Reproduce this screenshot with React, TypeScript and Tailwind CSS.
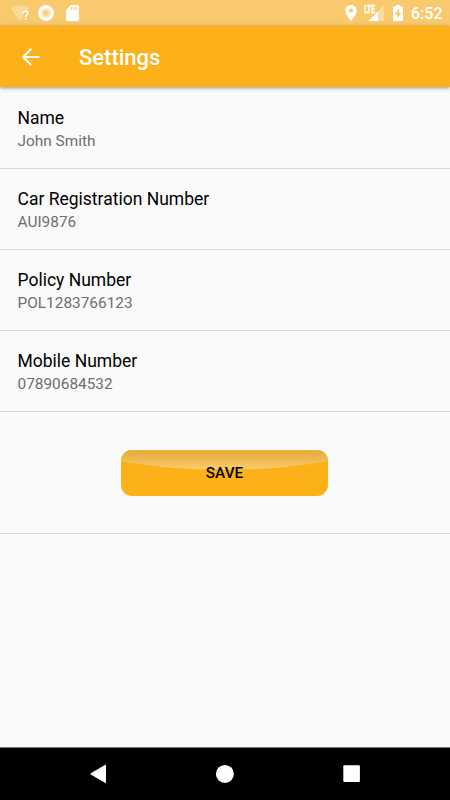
import React from "react";

const fields = [
  { label: "Name", value: "John Smith" },
  { label: "Car Registration Number", value: "AUI9876" },
  { label: "Policy Number", value: "POL1283766123" },
  { label: "Mobile Number", value: "07890684532" },
];

function StatusBar() {
  return (
    <header className="flex h-[26px] shrink-0 items-center justify-between bg-[#f9ca6d] text-white">
      <div className="flex items-center pl-[10px]">
        <svg className="h-[26px] w-5" viewBox="0 0 20 26" fill="none">
          <path d="M.7 8.8Q10 2.2 19.3 8.8L17.2 11.4H14L12.6 18L10 20.5Z" fill="#fff" fillOpacity=".32" />
          <path d="M13 13.5C13 10.4 17.8 10.5 17.8 13.2C17.8 15 15.5 15.1 15.5 17.2" stroke="#fff" strokeWidth="1.6" />
          <path d="M14.7 18.2h1.6v1.6h-1.6z" fill="#fff" />
        </svg>
        <svg className="ml-2 h-4 w-4" viewBox="0 0 16 16" fill="none">
          <circle cx="8" cy="8" r="6.4" stroke="#fff" strokeWidth="3.1" />
          <circle cx="8" cy="8" r="5" fill="#fff" fillOpacity=".5" />
          <circle cx="8" cy="8" r="2.8" fill="#f9ca6d" fillOpacity=".75" />
        </svg>
        <svg className="ml-3 h-4 w-[13px]" viewBox="0 0 13 16">
          <path fill="#fff" fillRule="evenodd" d="M5 0h6.6Q13 0 13 1.4v13.2Q13 16 11.6 16H1.4Q0 16 0 14.6V5ZM5 2v3.3h1.1v-3.3ZM7.4 2v3.3h1.1v-3.3ZM9.8 2v3.3h1.1v-3.3Z" />
        </svg>
      </div>
      <div className="flex items-center pr-2">
        <svg className="h-4 w-3" viewBox="0 0 12 16">
          <path fill="#fff" fillRule="evenodd" d="M6 0C2.7 0 .3 2.4.3 5.6C.3 9.8 6 16 6 16s5.7-6.2 5.7-10.4C11.7 2.4 9.3 0 6 0Zm0 3.6a2 2 0 1 1 0 4a2 2 0 0 1 0-4Z" />
        </svg>
        <svg className="ml-[7px] h-[26px] w-5" viewBox="0 0 20 26">
          <path d="M20 5.3V21H14V11.3Z" fill="#fff" fillOpacity=".35" />
          <path d="M4.3 21L14 11.3V21Z" fill="#fff" />
          <text x="0.3" y="12.6" fill="#fff" stroke="#fff" strokeWidth=".4" fontFamily="Roboto, sans-serif" fontSize="10" fontWeight="700" textLength="10.5" lengthAdjust="spacingAndGlyphs">LTE</text>
        </svg>
        <svg className="ml-[9px] h-4 w-[10px]" viewBox="0 0 10 16">
          <path fill="#fff" fillRule="evenodd" d="M3 0h4v1.5h2Q10 1.5 10 2.5V15Q10 16 9 16H1Q0 16 0 15V2.5Q0 1.5 1 1.5H3ZM6.2 3.6L1.8 9.2H4.2V13.8L8.3 7.9H6.2Z" />
        </svg>
        <span className="ml-2 w-[31px] pt-[2px] text-[16px] leading-none font-medium">6:52</span>
      </div>
    </header>
  );
}

function SaveButton() {
  return (
    <button className="relative h-[46px] w-[207px] overflow-hidden rounded-[11px] bg-[#fdb118] pt-px text-[15.3px] font-medium text-black">
      <svg className="absolute inset-0 h-[46px] w-[207px]" viewBox="0 0 207 46">
        <defs>
          <linearGradient id="gloss" x1="0" y1="0" x2="0" y2="1">
            <stop offset="0.2" stopColor="#e8b040" />
            <stop offset="1" stopColor="#f9cd70" />
          </linearGradient>
        </defs>
        <path d="M0 0H207V11Q160 19.8 103.5 19.8T0 11Z" fill="url(#gloss)" />
      </svg>
      <span className="relative">SAVE</span>
    </button>
  );
}

export default function App() {
  return (
    <div className="flex h-[800px] w-[450px] flex-col overflow-hidden bg-[#fafafa] font-['Roboto',sans-serif]">
      <StatusBar />
      <div className="z-10 flex h-[61.3px] shrink-0 items-center bg-[#fdb118] text-white shadow-[0_1px_4px_rgba(0,0,0,0.42)]">
        <svg className="ml-[22px] h-[18px] w-[18px]" viewBox="0 0 18 18" fill="none" stroke="#fff" strokeWidth="2">
          <path d="M17.6 9H1.5M9.3 .8L1.2 9L9.3 17.2" />
        </svg>
        <h1 className="ml-[39px] pt-[3px] text-[22px] leading-[26px] font-medium">Settings</h1>
      </div>
      <main className="flex flex-1 flex-col pt-[0.7px]">
        {fields.map((field) => (
          <section key={field.label} className="h-[81px] shrink-0 border-b border-[#d8d8d8] pt-5 pl-[17.5px]">
            <h2 className="text-[17.5px] leading-[21px] text-black">{field.label}</h2>
            <p className="mt-px text-[15.4px] leading-[22px] text-[#6e6e6e]">{field.value}</p>
          </section>
        ))}
        <div className="flex h-[122px] shrink-0 justify-center border-b border-[#d8d8d8] pt-[38px] pr-px">
          <SaveButton />
        </div>
      </main>
      <nav className="h-[53px] shrink-0 border-t border-[#777] bg-black">
        <svg className="h-[52px] w-[450px]" viewBox="0 0 450 52" fill="#fff">
          <path d="M104.9 17Q106 16.4 106 17.5V34.2Q106 35.3 104.9 34.7L90.8 26.5Q90 25.9 90.8 25.3Z" />
          <circle cx="224.9" cy="25.9" r="9" />
          <rect x="343.3" y="17.3" width="16.6" height="16.6" rx="1" />
        </svg>
      </nav>
    </div>
  );
}
